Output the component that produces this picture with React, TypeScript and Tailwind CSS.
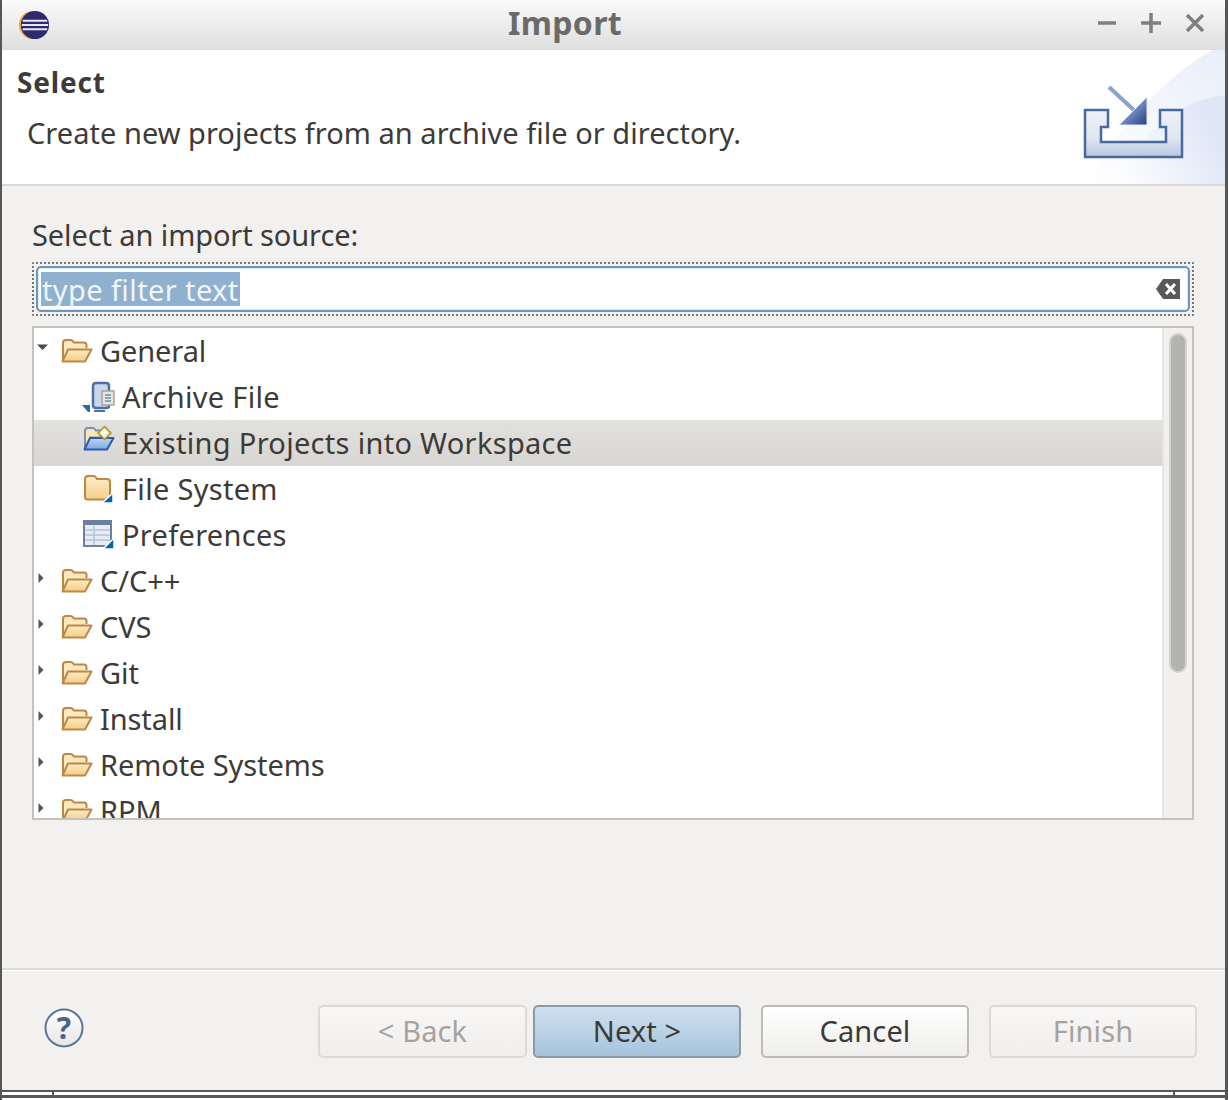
import React from "react";

const FONT = "font-['Noto_Sans','Open_Sans',sans-serif]";

function OpenFolder() {
  return (
    <svg width="32" height="26" viewBox="0 0 32 26" className="shrink-0">
      <defs>
        <linearGradient id="fold" x1="0" y1="0" x2="0" y2="1">
          <stop offset="0" stopColor="#fdecc6" />
          <stop offset="1" stopColor="#f4cd85" />
        </linearGradient>
      </defs>
      <path d="M2 23V5c0-2 1-3 3-3h5c1.500 0 2 1 3 2.500h10c1.500 0 2.500 1 2.500 2.500v3" fill="#fbe8bd" stroke="#bd8745" strokeWidth="2" />
      <path d="M1.500 23.500 7 11.500h23.500L24 23.500Z" fill="url(#fold)" stroke="#bd8745" strokeWidth="2" strokeLinejoin="round" />
    </svg>
  );
}

function ArchiveIcon() {
  return (
    <svg width="34" height="32" viewBox="0 0 34 32" className="shrink-0 -ml-[1px]">
      <path d="M0 24h8v7h-2Z" fill="#1f6fae" />
      <path d="M11 5c0-2 1-3 3-3h10c2 0 3 1 3 3v20c0 1-1 2-3 2H14c-2 0-3-1-3-3Z" fill="#c9d7ea" stroke="#4d6ea6" strokeWidth="2.500" />
      <path d="M12 29h11v2H12Z" fill="#4d6ea6" />
      <rect x="20" y="10" width="12" height="14" fill="#e8e6dc" stroke="#a9a692" strokeWidth="1.500" />
      <path d="M23 14h6M23 17h6M23 20h6" stroke="#6f8fb8" strokeWidth="1.500" />
    </svg>
  );
}

function ExistingIcon() {
  return (
    <svg width="32" height="26" viewBox="0 0 32 26" className="shrink-0 -mt-[8px] overflow-visible">
      <defs>
        <linearGradient id="exf" x1="0" y1="0" x2="0" y2="1">
          <stop offset="0" stopColor="#bcd8f4" />
          <stop offset="1" stopColor="#7fa9de" />
        </linearGradient>
      </defs>
      <path d="M2 22V5c0-2 1-3 3-3h5c1.500 0 2 1 3 2.500h5v7H6" fill="#f8e8b6" stroke="#7d8fb8" strokeWidth="2" />
      <path d="M1.500 23.500 7 12h23.500L24 23.500Z" fill="url(#exf)" stroke="#3559ad" strokeWidth="2" strokeLinejoin="round" />
      <path d="M21.500 0.500 28 7 21.500 13.500 15 7Z" fill="#f4e4a8" stroke="#a98f3c" strokeWidth="1.500" />
      <path d="M21.500 3.500v7M18 7h7" stroke="#fff" strokeWidth="2.500" />
    </svg>
  );
}

function FolderIcon() {
  return (
    <svg width="32" height="32" viewBox="0 0 32 32" className="shrink-0">
      <defs>
        <linearGradient id="fs" x1="0" y1="0" x2="0" y2="1">
          <stop offset="0" stopColor="#fdeccb" />
          <stop offset="1" stopColor="#f3cf8b" />
        </linearGradient>
      </defs>
      <path d="M2 6c0-2 1-3 3-3h6c1.500 0 2 1 3 3h10c2 0 3 1 3 3v15c0 1.500-1 2.500-2.500 2.500H4.500C3 26.500 2 25.500 2 24Z" fill="url(#fs)" stroke="#bd8745" strokeWidth="2" />
      <path d="M30 20v10H19Z" fill="#0f5fa8" stroke="#fff" strokeWidth="1.500" />
    </svg>
  );
}

function PrefsIcon() {
  return (
    <svg width="34" height="30" viewBox="0 0 34 30" className="shrink-0">
      <rect x="1" y="1" width="27" height="25" fill="#e7ebf3" stroke="#6d7f9e" strokeWidth="2" />
      <rect x="1" y="1" width="27" height="4" fill="#6d7f9e" />
      <path d="M2 10h25M2 15h25M2 20h25M11 6v19" stroke="#b7c3d6" strokeWidth="1.500" />
      <path d="M31 18v11H20Z" fill="#0f5fa8" stroke="#fff" strokeWidth="1.500" />
    </svg>
  );
}

function Tri({ open = false }: { open?: boolean }) {
  return (
    <svg width="12" height="14" viewBox="0 0 12 14" className="shrink-0 -mt-[6px]">
      {open ? <path d="M1 3.500h11L6.500 9Z" fill="#4a4a4a" /> : <path d="M2.500 2l5 5-5 5Z" fill="#555" />}
    </svg>
  );
}

function TopRow({ label, open = false }: { label: string; open?: boolean }) {
  return (
    <div className="h-[46px] shrink-0 flex items-center pl-[2px]">
      <Tri open={open} />
      <span className="ml-[13px]"><OpenFolder /></span>
      <span className="ml-[7px] pb-[2px] text-[29px] leading-none tracking-[-0.1px] text-[#3c3b37] whitespace-nowrap">{label}</span>
    </div>
  );
}

function ChildRow({ label, icon, selected = false }: { label: string; icon: React.ReactNode; selected?: boolean }) {
  return (
    <div className={`h-[46px] shrink-0 flex items-center pl-[49px] ${selected ? "bg-gradient-to-b from-[#e3e1de] to-[#d8d6d2]" : ""}`}>
      <span className="w-[36px] h-[32px] shrink-0 flex items-center">{icon}</span>
      <span className="ml-[3px] pb-[2px] text-[29px] leading-none tracking-[0.3px] text-[#3c3b37] whitespace-nowrap">{label}</span>
    </div>
  );
}

function WizButton({ label, kind, wide = false }: { label: string; kind: "off" | "next" | "on"; wide?: boolean }) {
  const cls =
    kind === "next"
      ? "border-[#8d9aa6] bg-gradient-to-b from-[#cfe0ef] to-[#a6c3dc] text-[#3c3b37]"
      : kind === "on"
      ? "border-[#bdbbb6] bg-gradient-to-b from-[#ffffff] to-[#efeeec] text-[#3c3b37]"
      : "border-[#dbdad6] bg-gradient-to-b from-[#f8f7f6] to-[#f0efed] text-[#a5a3a0]";
  return (
    <div className={`${wide ? "w-[209px]" : "w-[208px]"} h-[53px] border-2 rounded-[5px] flex items-center justify-center pb-[2px] text-[29px] leading-none tracking-[0.1px] ${cls}`}>
      {label}
    </div>
  );
}

function ImportBanner() {
  return (
    <svg width="102" height="75" viewBox="1083 85 102 75" className="shrink-0">
      <defs>
        <linearGradient id="trayg" x1="0" y1="0" x2="0" y2="1">
          <stop offset="0" stopColor="#eef1f8" />
          <stop offset="0.6" stopColor="#dfe5f1" />
          <stop offset="1" stopColor="#b9c7df" />
        </linearGradient>
        <linearGradient id="arrg" x1="0" y1="0" x2="1" y2="1">
          <stop offset="0" stopColor="#cbd8ef" />
          <stop offset="1" stopColor="#1f3f8a" />
        </linearGradient>
      </defs>
      <path d="M1085 110h23v17h-7v15h65v-15h-6v-17h22v47h-97Z" fill="url(#trayg)" stroke="#46699f" strokeWidth="2.500" />
      <path d="M1109 87l28 26" stroke="#8aa3cc" strokeWidth="4" />
      <path d="M1147 97v28h-28Z" fill="url(#arrg)" stroke="#e6ebf5" strokeWidth="1" />
    </svg>
  );
}

export default function App() {
  return (
    <div className={`${FONT} w-[1228px] h-[1100px] flex flex-col bg-[#f2f1ef] border-l-2 border-l-[#565656] border-r-[3px] border-r-[#565656] overflow-hidden`}>
      {/* Title bar */}
      <div className="h-[50px] shrink-0 flex items-center pb-[4px] bg-gradient-to-b from-[#fbfbfb] to-[#dedede]">
        <div className="w-[48px] pl-[16px] shrink-0 flex items-center">
          <svg width="34" height="32" viewBox="0 0 34 32" className="mt-[4px]">
            <circle cx="16" cy="16" r="15" fill="#f2a73c" />
            <circle cx="18" cy="16" r="15" fill="#2d2a70" />
            <path d="M5 11.500h26M4 16h28M5 20.500h26" stroke="#e9e8f4" strokeWidth="2" />
          </svg>
        </div>
        <div className="w-[1030px] shrink-0 text-center text-[32px] font-bold leading-none tracking-[0.3px] text-[#6a6a68]">Import</div>
        <div className="flex-1 flex items-center gap-[23px] pl-[17px]">
          <svg width="20" height="22" viewBox="0 0 20 22"><path d="M1 11h18" stroke="#7f7f7f" strokeWidth="3.500" /></svg>
          <svg width="22" height="22" viewBox="0 0 22 22"><path d="M1 11h20M11 1v20" stroke="#7f7f7f" strokeWidth="3.500" /></svg>
          <svg width="20" height="20" viewBox="0 0 20 20"><path d="M2 2l16 16M18 2L2 18" stroke="#7f7f7f" strokeWidth="3.500" /></svg>
        </div>
      </div>

      {/* Header banner */}
      <div className="h-[134px] shrink-0 bg-white flex relative overflow-hidden">
        <div className="flex-1 pl-[15px] pt-[15px]">
          <div className="text-[28px] font-bold leading-[34px] tracking-[0.8px] text-[#3c3b37]">Select</div>
          <div className="pl-[10px] pt-[17px] text-[29px] leading-[34px] tracking-[0.03px] text-[#3c3b37] whitespace-nowrap">Create new projects from an archive file or directory.</div>
        </div>
        <svg className="absolute right-0 top-0" width="150" height="134" viewBox="0 0 150 134">
          <defs>
            <linearGradient id="bang" x1="0" y1="1" x2="1" y2="0.600">
              <stop offset="0" stopColor="#ffffff" />
              <stop offset="1" stopColor="#dfe6f6" />
            </linearGradient>
            <linearGradient id="bang2" x1="0" y1="1" x2="1" y2="0">
              <stop offset="0" stopColor="#ffffff" />
              <stop offset="1" stopColor="#e9eef9" />
            </linearGradient>
          </defs>
          <path d="M150 0h-12C90 25 40 85 10 134H150Z" fill="url(#bang2)" />
          <path d="M150 45C100 50 60 90 40 134H150Z" fill="url(#bang)" />
        </svg>
        <div className="absolute right-[40px] top-[35px]">
          <ImportBanner />
        </div>
      </div>
      <div className="h-[2px] shrink-0 bg-[#d9d8d5]" />

      {/* Body */}
      <div className="flex-1 flex flex-col pl-[30px] pr-[31px]">
        <div className="pt-[32px] text-[29px] leading-[34px] tracking-[-0.1px] text-[#3c3b37]">Select an import source:</div>
        {/* filter */}
        <div className="mt-[10px] h-[54px] border-2 border-dotted border-[#777] rounded-[2px] p-[2px]">
          <div className="h-full border-2 border-[#6a97ba] rounded-[5px] bg-white flex items-center pl-[3px] pr-[8px] shadow-[inset_0_0_0_1px_#dfe9f2]">
            <span className="bg-[#8fb0cf] text-[#f0f5fa] h-[34px] px-[1px] flex items-center text-[29px] leading-none tracking-[0.4px]">type filter text</span>
            <span className="flex-1" />
            <svg width="24" height="20" viewBox="0 0 24 20">
              <path d="M7 0h17v20H7L0 10Z" fill="#585858" />
              <path d="M10 5l9 10M19 5l-9 10" stroke="#fff" strokeWidth="3" />
            </svg>
          </div>
        </div>
        {/* tree */}
        <div className="mt-[10px] h-[494px] border-2 border-[#c4c2bc] bg-white flex overflow-hidden">
          <div className="flex-1 flex flex-col overflow-hidden">
            <TopRow label="General" open />
            <ChildRow label="Archive File" icon={<ArchiveIcon />} />
            <ChildRow label="Existing Projects into Workspace" icon={<ExistingIcon />} selected />
            <ChildRow label="File System" icon={<FolderIcon />} />
            <ChildRow label="Preferences" icon={<PrefsIcon />} />
            <TopRow label="C/C++" />
            <TopRow label="CVS" />
            <TopRow label="Git" />
            <TopRow label="Install" />
            <TopRow label="Remote Systems" />
            <TopRow label="RPM" />
          </div>
          <div className="w-[30px] shrink-0 bg-[#f1f0ee] border-l-2 border-l-[#e6e5e2] pt-[5px] flex justify-center">
            <div className="w-[18px] h-[340px] rounded-full bg-[#b3b3b1] border-2 border-[#d3d2cf]" />
          </div>
        </div>
      </div>

      {/* Footer */}
      <div className="h-[2px] shrink-0 bg-[#dcdbd8]" />
      <div className="h-[1px] shrink-0 bg-white" />
      <div className="h-[119px] shrink-0 flex items-start pl-[42px] pr-[28px] pt-[35px]">
        <svg width="40" height="42" viewBox="0 0 40 42" className="mt-[1px] shrink-0">
          <defs>
            <linearGradient id="hlp" x1="0" y1="0" x2="0" y2="1">
              <stop offset="0" stopColor="#ffffff" />
              <stop offset="1" stopColor="#e6e6e6" />
            </linearGradient>
          </defs>
          <circle cx="20" cy="21" r="18.500" fill="url(#hlp)" stroke="#5f7596" strokeWidth="2" />
          <text x="20" y="32" textAnchor="middle" fontSize="30" fontWeight="700" fill="#4c6284" fontFamily="Noto Sans">?</text>
        </svg>
        <div className="flex-1" />
        <div className="flex -mt-[1px]">
          <WizButton label="< Back" kind="off" wide />
          <span className="w-[6px]" />
          <WizButton label="Next >" kind="next" />
          <span className="w-[20px]" />
          <WizButton label="Cancel" kind="on" />
          <span className="w-[20px]" />
          <WizButton label="Finish" kind="off" />
        </div>
      </div>
      <div className="h-[2px] shrink-0 bg-[#565656]" />
      <div className="h-[3px] shrink-0 bg-white flex pl-[50px] pr-[50px] justify-between">
        <span className="w-[2px] h-full bg-[#565656]" />
        <span className="w-[2px] h-full bg-[#565656]" />
      </div>
      <div className="h-[3px] shrink-0 bg-[#565656]" />
      <div className="h-[2px] shrink-0 bg-white" />
    </div>
  );
}
